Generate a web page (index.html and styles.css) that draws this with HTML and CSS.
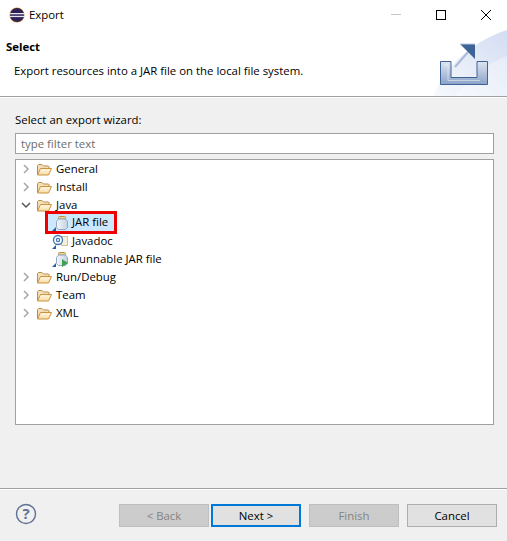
FILE: index.html
```html
<!DOCTYPE html>
<html lang="en">
<head>
    <meta charset="UTF-8">
    <meta name="viewport" content="width=device-width, initial-scale=1.0">
    <title>Export</title>
    <link rel="stylesheet" href="styles.css">
</head>
<body>
    <svg class="defs" width="0" height="0">
        <defs>
            <linearGradient id="folder-front" x1="0" y1="0" x2="0" y2="1">
                <stop offset="0" stop-color="#fff7e2"/>
                <stop offset="1" stop-color="#f6dca6"/>
            </linearGradient>
            <linearGradient id="jar-body" x1="0" y1="0" x2="1" y2="0">
                <stop offset="0" stop-color="#f4f7fb"/>
                <stop offset="1" stop-color="#c3d1e2"/>
            </linearGradient>
        </defs>
        <symbol id="folder" viewBox="0 0 16 16">
            <path d="M1.500 14V4.500l1-1h3.500l1.500 1.500h5l.5 .5v2" fill="#f4dfb4" stroke="#b98d4c"/>
            <path d="M1.500 14l3-6.500h11l-3 6.500z" fill="url(#folder-front)" stroke="#c9933f"/>
        </symbol>
        <symbol id="chev-right" viewBox="0 0 10 10">
            <path d="M3 1l4 4-4 4" fill="none" stroke="#a6a6a6" stroke-width="1.500"/>
        </symbol>
        <symbol id="chev-down" viewBox="0 0 10 10">
            <path d="M1 3l4 4 4-4" fill="none" stroke="#555" stroke-width="1.500"/>
        </symbol>
        <symbol id="jar" viewBox="0 0 12 14">
            <rect x="2.500" y="0.500" width="7" height="2.500" rx="1" fill="#f0d68f" stroke="#b3924f"/>
            <path d="M2.500 3h7l2 2.500v6l-2 2h-7l-2-2v-6z" fill="url(#jar-body)" stroke="#93a8c0"/>
        </symbol>
        <symbol id="corner" viewBox="0 0 4 4">
            <path d="M0 4h4V0z" fill="#1f5fa8"/>
        </symbol>
    </svg>

    <div class="titlebar">
        <svg class="app-icon" width="16" height="16" viewBox="0 0 16 16">
            <circle cx="8" cy="8" r="7.500" fill="#d98a2b"/>
            <circle cx="8" cy="8" r="7" fill="#2c2255"/>
            <rect x="0.500" y="6" width="15" height="1.300" fill="#e6e3ee"/>
            <rect x="0.500" y="8.800" width="15" height="1.300" fill="#e6e3ee"/>
        </svg>
        <span class="title">Export</span>
        <div class="window-btns">
            <svg width="10" height="10" viewBox="0 0 10 10"><path d="M0 4.500h10" stroke="#c4c4c4"/></svg>
            <svg width="10" height="10" viewBox="0 0 10 10"><rect x="0.500" y="0.500" width="9" height="9" fill="none" stroke="#000"/></svg>
            <svg width="10" height="10" viewBox="0 0 10 10"><path d="M0 0l10 10M10 0L0 10" stroke="#000"/></svg>
        </div>
    </div>

    <div class="banner">
        <div class="banner-text">
            <h1>Select</h1>
            <p>Export resources into a JAR file on the local file system.</p>
        </div>
        <svg class="banner-art" width="73" height="66" viewBox="0 0 73 66">
            <defs>
                <linearGradient id="wash" x1="0" y1="1" x2="1" y2="0">
                    <stop offset="0" stop-color="#f7f9fd"/>
                    <stop offset="1" stop-color="#d3ddf2"/>
                </linearGradient>
                <linearGradient id="tray" x1="0" y1="0" x2="0" y2="1">
                    <stop offset="0" stop-color="#dfe5f0"/>
                    <stop offset="1" stop-color="#8ba3c8"/>
                </linearGradient>
            </defs>
            <path d="M0 66C6 44 34 12 73 0v66z" fill="url(#wash)"/>
            <path d="M22 66C34 48 52 34 73 26v40z" fill="#fff" opacity=".35"/>
            <path d="M6.500 31.500h10.500v16h26v-16h10.500v23H6.500z" fill="url(#tray)" stroke="#3f6396"/>
            <path d="M10 35h4v15.500h32" fill="none" stroke="#fff" opacity=".45"/>
            <path d="M21 37l13-15" stroke="#a9bdd9" stroke-width="2"/>
            <path d="M26 14h15v15z" fill="#3f6396"/>
            <path d="M26 14h15" stroke="#b9c9e0"/>
        </svg>
    </div>

    <main class="content">
        <label class="field-label">Select an export wizard:</label>
        <input class="filter" type="text" placeholder="type filter text">
        <div class="tree">
            <div class="row">
                <svg class="chev"><use href="#chev-right"/></svg>
                <svg class="ico"><use href="#folder"/></svg>
                <span class="text">General</span>
            </div>
            <div class="row">
                <svg class="chev"><use href="#chev-right"/></svg>
                <svg class="ico"><use href="#folder"/></svg>
                <span class="text">Install</span>
            </div>
            <div class="row">
                <svg class="chev"><use href="#chev-down"/></svg>
                <svg class="ico"><use href="#folder"/></svg>
                <span class="text">Java</span>
            </div>
            <div class="row child">
                <div class="selected">
                    <svg class="leaf" width="18" height="18" viewBox="0 0 18 18">
                        <use href="#corner" x="1" y="13" width="4" height="4"/>
                        <use href="#jar" x="5" y="2" width="12" height="14"/>
                    </svg>
                    <span class="text">JAR file</span>
                </div>
            </div>
            <div class="row child">
                <svg class="leaf" width="18" height="18" viewBox="0 0 18 18">
                    <rect x="10.500" y="4.500" width="6" height="9" fill="#f6f0da" stroke="#c9c2a4"/>
                    <circle cx="7" cy="8" r="4.500" fill="#fff" stroke="#3f74b5" stroke-width="1.300"/>
                    <circle cx="7" cy="8" r="1.600" fill="none" stroke="#3f74b5" stroke-width="1.200"/>
                    <use href="#corner" x="1" y="13" width="4" height="4"/>
                </svg>
                <span class="text">Javadoc</span>
            </div>
            <div class="row child">
                <svg class="leaf" width="18" height="18" viewBox="0 0 18 18">
                    <use href="#corner" x="1" y="13" width="4" height="4"/>
                    <use href="#jar" x="5" y="2" width="12" height="14"/>
                    <path d="M11 9l6 4-6 4z" fill="#3fa34d"/>
                </svg>
                <span class="text">Runnable JAR file</span>
            </div>
            <div class="row">
                <svg class="chev"><use href="#chev-right"/></svg>
                <svg class="ico"><use href="#folder"/></svg>
                <span class="text">Run/Debug</span>
            </div>
            <div class="row">
                <svg class="chev"><use href="#chev-right"/></svg>
                <svg class="ico"><use href="#folder"/></svg>
                <span class="text">Team</span>
            </div>
            <div class="row">
                <svg class="chev"><use href="#chev-right"/></svg>
                <svg class="ico"><use href="#folder"/></svg>
                <span class="text">XML</span>
            </div>
        </div>
    </main>

    <footer class="footer">
        <svg class="help" width="22" height="22" viewBox="0 0 22 22">
            <circle cx="11" cy="11" r="9.500" fill="none" stroke="#5f7190" stroke-width="1.400"/>
            <text x="11" y="16" text-anchor="middle" class="help-mark">?</text>
        </svg>
        <div class="buttons">
            <button class="btn" disabled>&lt; Back</button>
            <button class="btn default">Next &gt;</button>
            <button class="btn finish" disabled>Finish</button>
            <button class="btn cancel">Cancel</button>
        </div>
    </footer>
</body>
</html>
```

FILE: styles.css
```css
html, body {
    margin: 0;
    height: 541px;
    overflow: hidden;
}
body {
    font-family: "Open Sans", "Noto Sans", sans-serif;
    font-size: 11.4px;
    color: #000;
    background-color: #f0f0f0;
    display: flex;
    flex-direction: column;
}
.defs {
    position: absolute;
}
.titlebar {
    height: 30px;
    background-color: #fff;
    display: flex;
    align-items: center;
    padding-left: 9px;
}
.title {
    margin-left: 4px;
    padding-bottom: 1px;
}
.window-btns {
    margin-left: auto;
    margin-right: 16px;
    display: flex;
    gap: 35px;
}
.banner {
    height: 66px;
    background-color: #fff;
    border-bottom: 1px solid #a0a0a0;
    display: flex;
    justify-content: space-between;
}
.banner h1 {
    font-size: 11.4px;
    font-weight: bold;
    margin: 9px 0 0 6px;
    line-height: 16px;
}
.banner p {
    margin: 8px 0 0 14px;
    line-height: 16px;
}
.banner-art {
    display: block;
}
.content {
    border-top: 1px solid #fff;
    padding: 14px 13px 0 15px;
    display: flex;
    flex-direction: column;
    height: 376px;
    box-sizing: content-box;
    border-bottom: 1px solid #a0a0a0;
    box-shadow: 0 1px 0 #fff;
}
.field-label {
    line-height: 16px;
    margin-bottom: 5px;
}
.filter {
    box-sizing: border-box;
    height: 21px;
    border: 1px solid #a0a0a0;
    padding: 0 5px;
    font: inherit;
    outline: none;
    margin-bottom: 5px;
}
.filter::placeholder {
    color: #6d6d6d;
    opacity: 1;
}
.tree {
    box-sizing: border-box;
    height: 266px;
    background-color: #fff;
    border: 1px solid #a0a0a0;
}
.row {
    height: 18px;
    display: flex;
    align-items: center;
    padding-left: 5px;
}
.row.child {
    padding-left: 35px;
}
.chev {
    width: 10px;
    height: 10px;
    margin-right: 5px;
}
.ico {
    width: 16px;
    height: 16px;
    margin-right: 4px;
}
.leaf {
    margin-right: 3px;
    flex: none;
}
.selected {
    display: flex;
    align-items: center;
    align-self: flex-start;
    height: 17px;
    width: 66px;
    margin-left: -3px;
    padding-left: 3px;
    box-sizing: border-box;
    background-color: #cce8ff;
    outline: 3px solid #ee0000;
}
.text {
    white-space: nowrap;
    padding-bottom: 2px;
}
.footer {
    flex: 1;
    display: flex;
    align-items: flex-start;
    justify-content: space-between;
    padding: 15px 10px 0 15px;
}
.help {
    margin-top: -1px;
}
.help-mark {
    font-size: 15px;
    font-weight: bold;
    fill: #5f7190;
}
.buttons {
    display: flex;
    gap: 2px;
}
.btn {
    box-sizing: border-box;
    width: 90px;
    height: 23px;
    font: inherit;
    color: #000;
    background-color: #e1e1e1;
    border: 1px solid #adadad;
    padding: 0 0 1px;
}
.btn:disabled {
    background-color: #cccccc;
    border-color: #bfbfbf;
    color: #838383;
}
.btn.default {
    border: 2px solid #0078d7;
}
.btn.finish {
    margin-left: 6px;
}
.btn.cancel {
    margin-left: 6px;
}
```
